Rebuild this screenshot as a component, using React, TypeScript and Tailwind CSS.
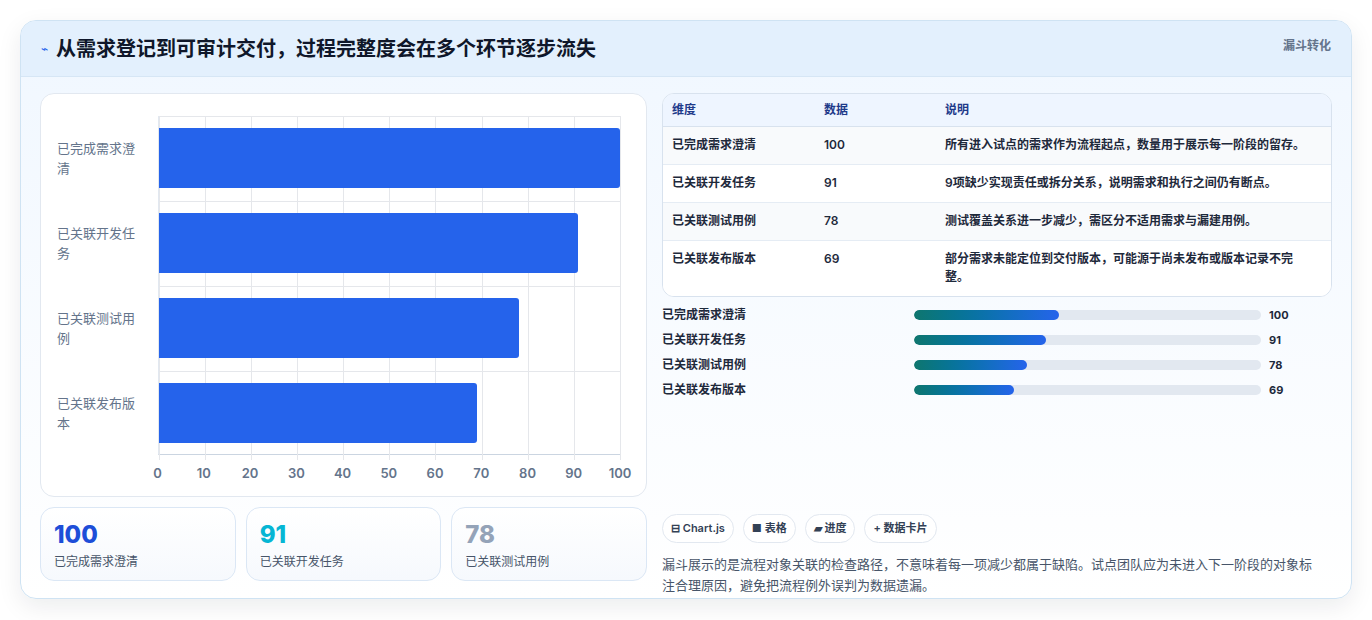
import React from "react";

const rows = [
  { n: "已完成需求澄清", v: 100, d: "所有进入试点的需求作为流程起点，数量用于展示每一阶段的留存。" },
  { n: "已关联开发任务", v: 91, d: "9项缺少实现责任或拆分关系，说明需求和执行之间仍有断点。" },
  { n: "已关联测试用例", v: 78, d: "测试覆盖关系进一步减少，需区分不适用需求与漏建用例。" },
  { n: "已关联发布版本", v: 69, d: "部分需求未能定位到交付版本，可能源于尚未发布或版本记录不完整。" },
];
const ticks = [0, 10, 20, 30, 40, 50, 60, 70, 80, 90, 100];

export default function App() {
  return (
    <div className="w-[1372px] h-[620px] bg-white pt-[20px] pl-[20px]" style={{ fontFamily: "Inter, 'Noto Sans CJK SC', sans-serif" }}>
      <div className="w-[1332px] h-[579px] rounded-[16px] border border-[#cfe3f3] overflow-hidden shadow-[0_8px_24px_rgba(15,23,42,0.08)] bg-gradient-to-b from-[#f0f7ff] to-white">
        <div className="h-[56px] bg-[#e3f0fd] border-b border-[#d6e6f5] flex items-center px-[20px] relative">
          <span className="text-[#2563eb] text-[12px] mr-[8px]">⌁</span>
          <span className="text-[20px] font-bold text-[#0f172a]">从需求登记到可审计交付，过程完整度会在多个环节逐步流失</span>
          <span className="absolute right-[20px] top-[16px] text-[12px] font-semibold text-[#64748b]">漏斗转化</span>
        </div>
        <div className="flex gap-[15px] px-[19px] pt-[16px]">
          <div className="w-[607px] flex flex-col gap-[10px]">
            <div className="h-[404px] bg-white rounded-[14px] border border-[#e2e8f0] pt-[22px] pl-[16px] pr-[26px]">
              <div className="flex">
                <div className="w-[101px] flex flex-col pt-[0px]">
                  {rows.map(r => (
                    <div key={r.n} className="h-[85px] flex items-center justify-end pr-[12px] text-[13px] text-[#64748b]">{r.n}</div>
                  ))}
                </div>
                <div className="w-[464px]">
                  <div className="relative h-[339px] border-b border-[#cbd5e1] border-l border-l-[#e2e8f0]">
                    {ticks.map(t => (
                      <div key={t} className="absolute top-0 bottom-[-6px] w-px bg-[#e5e7eb]" style={{ left: `${t}%` }} />
                    ))}
                    <div className="absolute left-0 right-0 top-0 h-px bg-[#e5e7eb]" />
                    {[1, 2, 3].map(i => (
                      <div key={i} className="absolute left-0 right-0 h-px bg-[#e5e7eb]" style={{ top: i * 85 }} />
                    ))}
                    <div className="relative flex flex-col pt-[12px] gap-[25px]">
                      {rows.map(r => (
                        <div key={r.n} className="h-[60px] bg-[#2563eb] rounded-r-[3px]" style={{ width: `${r.v}%` }} />
                      ))}
                    </div>
                  </div>
                  <div className="relative h-[30px]">
                    {ticks.map(t => (
                      <span key={t} className="absolute top-[9px] -translate-x-1/2 text-[13px] font-semibold text-[#64748b]" style={{ left: `${t}%` }}>{t}</span>
                    ))}
                  </div>
                </div>
              </div>
            </div>
            <div className="grid grid-cols-3 gap-[10px]">
              {[
                { v: 100, c: "text-[#1d4ed8]", n: "已完成需求澄清" },
                { v: 91, c: "text-[#06b6d4]", n: "已关联开发任务" },
                { v: 78, c: "text-[#94a3b8]", n: "已关联测试用例" },
              ].map(s => (
                <div key={s.n} className="h-[74px] rounded-[14px] border border-[#dbe7f5] bg-gradient-to-b from-white to-[#f6f9fd] px-[13px] pt-[13px]">
                  <div className={`text-[24px] leading-[28px] font-extrabold ${s.c}`}>{s.v}</div>
                  <div className="text-[12px] text-[#475569] mt-[4px]">{s.n}</div>
                </div>
              ))}
            </div>
          </div>
          <div className="w-[672px] flex flex-col">
            <div className="rounded-[12px] border border-[#d8e2ee] bg-white overflow-hidden text-[12px] text-[#1e293b] font-semibold">
              <div className="flex h-[33px] items-center bg-[#eef5ff] border-b border-[#d8e2ee] text-[#1e3a8a]">
                <div className="w-[161px] pl-[9px]">维度</div>
                <div className="w-[121px]">数据</div>
                <div className="flex-1">说明</div>
              </div>
              {rows.map((r, i) => (
                <div key={r.n} className={`flex py-[10px] ${i < 3 ? "border-b border-[#e5ecf4]" : ""} ${i % 2 === 0 ? "bg-[#f8fafc]" : "bg-white"}`}>
                  <div className="w-[161px] pl-[9px] leading-[15px]">{r.n}</div>
                  <div className="w-[121px] leading-[15px]">{r.v}</div>
                  <div className="flex-1 pr-[24px] leading-[18px] -mt-[1px]">{r.d}</div>
                </div>
              ))}
            </div>
            <div className="flex flex-col gap-[9px] mt-[10px]">
              {rows.map(r => (
                <div key={r.n} className="flex items-center h-[16px] text-[12px] font-semibold text-[#1e293b]">
                  <div className="w-[252px]">{r.n}</div>
                  <div className="w-[347px] h-[10px] rounded-full bg-[#e2e8f0] overflow-hidden">
                    <div className="h-full rounded-full bg-gradient-to-r from-[#0f766e] to-[#2563eb]" style={{ width: `${r.v * 0.418}%` }} />
                  </div>
                  <div className="ml-[8px] text-[11px] font-bold">{r.v}</div>
                </div>
              ))}
            </div>
            <div className="flex gap-[9px] mt-[116px] text-[11px] font-semibold text-[#334155]">
              {["⊟ Chart.js", "■ 表格", "▰ 进度", "+ 数据卡片"].map(c => (
                <span key={c} className="h-[29px] px-[8px] flex items-center rounded-full border border-[#e2e8f0] bg-white">{c}</span>
              ))}
            </div>
            <p className="mt-[11px] text-[13px] leading-[21px] text-[#475569] pr-[8px]">漏斗展示的是流程对象关联的检查路径，不意味着每一项减少都属于缺陷。试点团队应为未进入下一阶段的对象标注合理原因，避免把流程例外误判为数据遗漏。</p>
          </div>
        </div>
      </div>
    </div>
  );
}
